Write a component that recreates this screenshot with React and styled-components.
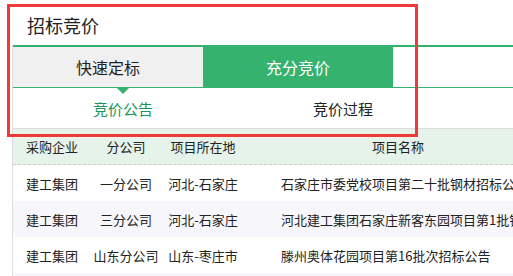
import React from 'react';
import styled, {createGlobalStyle} from 'styled-components';

const GlobalStyle = createGlobalStyle`
    html, body {
        margin: 0;
        padding: 0;
        background: #fff;
        overflow: hidden;
    }
    body {
        font-family: "Noto Sans CJK SC", "Noto Sans", sans-serif;
        color: #222;
    }
`

const green = '#34b26e';

const rows = [
    {company: '建工集团', branch: '一分公司', place: '河北-石家庄', name: '石家庄市委党校项目第二十批钢材招标公告'},
    {company: '建工集团', branch: '三分公司', place: '河北-石家庄', name: '河北建工集团石家庄新客东园项目第1批钢材招标公告'},
    {company: '建工集团', branch: '山东分公司', place: '山东-枣庄市', name: '滕州奥体花园项目第16批次招标公告'},
    {company: '', branch: '', place: '', name: ''},
];

const columns = '78px 70px 84px 306px';

const Page = styled.div`
    position: relative;
    width: 513px;
    height: 276px;
    overflow: hidden;
`

const Highlight = styled.div`
    position: absolute;
    left: 7px;
    top: 4px;
    width: 411px;
    height: 133px;
    border: 3px solid #f03a3a;
    box-sizing: border-box;
    pointer-events: none;
`

const Title = styled.div`
    height: 45px;
    box-sizing: border-box;
    padding: 4px 0 0 27px;
    display: flex;
    align-items: center;
    font-size: 18px;
`

const Panel = styled.div`
    margin-left: 12px;
    border-left: 1px solid #ddd;
`

const TabBar = styled.div`
    display: flex;
    border-top: 2px solid ${green};
    border-bottom: 1px solid ${green};
    height: 40px;
`

const Tab = styled.div`
    width: 190px;
    display: flex;
    align-items: center;
    justify-content: center;
    font-size: 16px;
    background: ${p => p.$active ? green : '#f0f0f0'};
    color: ${p => p.$active ? '#fff' : '#222'};
`

const SubTabs = styled.div`
    display: grid;
    grid-template-columns: 220px 220px;
    height: 40px;
    border-bottom: 1px solid #ddd;
`

const SubTab = styled.div`
    position: relative;
    display: flex;
    align-items: center;
    justify-content: center;
    font-size: 15px;
    color: ${p => p.$active ? '#17955b' : '#222'};
    &::before {
        content: '';
        display: ${p => p.$active ? 'block' : 'none'};
        position: absolute;
        top: 0;
        left: 50%;
        margin-left: -6px;
        border-left: 6px solid transparent;
        border-right: 6px solid transparent;
        border-top: 6px solid ${green};
    }
`

const HeadRow = styled.div`
    display: grid;
    grid-template-columns: ${columns};
    height: 35px;
    background: #e5f3ea;
    border-bottom: 1px dashed #ccc;
    font-size: 13px;
`

const Row = styled.div`
    display: grid;
    grid-template-columns: ${columns};
    height: 36px;
    background: ${p => p.$odd ? '#f7f7fb' : '#fff'};
    font-size: 13px;
`

const Cell = styled.div`
    display: flex;
    align-items: center;
    justify-content: ${p => p.$left ? 'flex-start' : 'center'};
    padding-left: ${p => p.$left ? '36px' : '0'};
    white-space: nowrap;
    overflow: hidden;
`

export default function App() {
    return (
        <Page>
            <GlobalStyle/>
            <Title>招标竞价</Title>
            <Panel>
                <TabBar>
                    <Tab>快速定标</Tab>
                    <Tab $active>充分竞价</Tab>
                </TabBar>
                <SubTabs>
                    <SubTab $active>竞价公告</SubTab>
                    <SubTab>竞价过程</SubTab>
                </SubTabs>
                <HeadRow>
                    <Cell>采购企业</Cell>
                    <Cell>分公司</Cell>
                    <Cell>项目所在地</Cell>
                    <Cell>项目名称</Cell>
                </HeadRow>
                {rows.map((r, i) => (
                    <Row key={i} $odd={i % 2 === 1}>
                        <Cell>{r.company}</Cell>
                        <Cell>{r.branch}</Cell>
                        <Cell>{r.place}</Cell>
                        <Cell $left>{r.name}</Cell>
                    </Row>
                ))}
            </Panel>
            <Highlight/>
        </Page>
    );
}
